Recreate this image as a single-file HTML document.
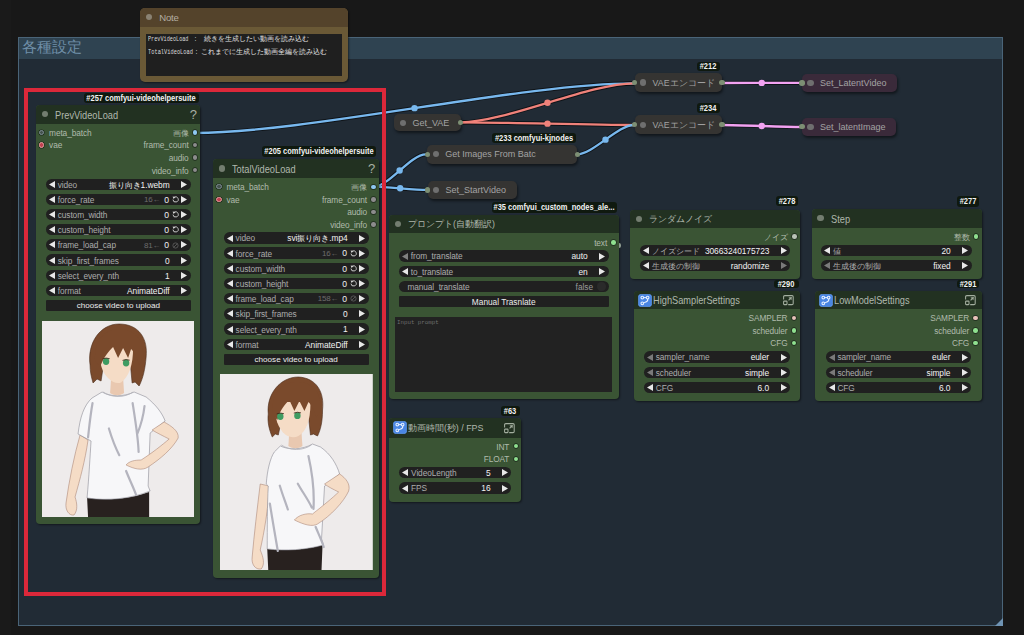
<!DOCTYPE html><html><head><meta charset="utf-8"><style>html,body{margin:0;padding:0;background:#181818;width:1024px;height:635px;overflow:hidden;position:relative;font-family:'Liberation Sans', sans-serif}</style></head><body>
<div style="position:absolute;left:0px;top:0px;width:11px;height:635px;background:#1a1a1a"></div>
<div style="position:absolute;left:18px;top:37px;width:985px;height:589px;background:#212b35;box-shadow:inset 0 0 0 1px #4a6478;"></div>
<div style="position:absolute;left:19px;top:38px;width:983px;height:21px;background:#2f4351;"></div>
<div style="position:absolute;left:21.50px;top:37.98px;height:18.44px;line-height:18.44px;font-size:14.75px;color:#6f8fa8;font-weight:400;font-family:'Liberation Sans', sans-serif;white-space:nowrap;">各種設定</div>
<svg style="position:absolute;left:995px;top:618px" width="8" height="8"><polygon points="8,0 8,8 0,8" fill="#6f93b3"/></svg>
<svg style="position:absolute;left:0;top:0" width="1024" height="635">
<path d="M195,133 C305.45108928842666,133 523.5489107115733,83.3 634,83.3" fill="none" stroke="rgba(0,0,0,0.55)" stroke-width="4.2"/>
<path d="M461,122.3 C505.3353696274205,122.3 589.6646303725795,83.3 634,83.3" fill="none" stroke="rgba(0,0,0,0.55)" stroke-width="4.2"/>
<path d="M461,122.3 C504.2552670203294,122.3 590.7447329796705,125 634,125" fill="none" stroke="rgba(0,0,0,0.55)" stroke-width="4.2"/>
<path d="M577,154.3 C593.022425690263,154.3 617.977574309737,125 634,125" fill="none" stroke="rgba(0,0,0,0.55)" stroke-width="4.2"/>
<path d="M373.5,186.7 C388.86753884003554,186.7 410.4324611599645,154.4 425.8,154.4" fill="none" stroke="rgba(0,0,0,0.55)" stroke-width="4.2"/>
<path d="M373.5,186.7 C386.8489934077443,186.7 413.45100659225574,189.9 426.8,189.9" fill="none" stroke="rgba(0,0,0,0.55)" stroke-width="4.2"/>
<path d="M722,83 C741.8750628929822,83 781.6249371070178,82.8 801.5,82.8" fill="none" stroke="rgba(0,0,0,0.55)" stroke-width="4.2"/>
<path d="M722,125 C741.8812883133866,125 781.6187116866134,127 801.5,127" fill="none" stroke="rgba(0,0,0,0.55)" stroke-width="4.2"/>
<path d="M195,133 C305.45108928842666,133 523.5489107115733,83.3 634,83.3" fill="none" stroke="#78b8ee" stroke-width="2.3"/>
<circle cx="414.5" cy="108.15" r="3.2" fill="#78b8ee"/>
<path d="M461,122.3 C505.3353696274205,122.3 589.6646303725795,83.3 634,83.3" fill="none" stroke="#f0827a" stroke-width="2.3"/>
<circle cx="547.5" cy="102.8" r="3.2" fill="#f0827a"/>
<path d="M461,122.3 C504.2552670203294,122.3 590.7447329796705,125 634,125" fill="none" stroke="#f0827a" stroke-width="2.3"/>
<circle cx="547.5" cy="123.65" r="3.2" fill="#f0827a"/>
<path d="M577,154.3 C593.022425690263,154.3 617.977574309737,125 634,125" fill="none" stroke="#78b8ee" stroke-width="2.3"/>
<circle cx="605.5" cy="139.65" r="3.2" fill="#78b8ee"/>
<path d="M373.5,186.7 C388.86753884003554,186.7 410.4324611599645,154.4 425.8,154.4" fill="none" stroke="#78b8ee" stroke-width="2.3"/>
<circle cx="399.65" cy="170.55" r="3.2" fill="#78b8ee"/>
<path d="M373.5,186.7 C386.8489934077443,186.7 413.45100659225574,189.9 426.8,189.9" fill="none" stroke="#78b8ee" stroke-width="2.3"/>
<circle cx="400.15" cy="188.3" r="3.2" fill="#78b8ee"/>
<path d="M722,83 C741.8750628929822,83 781.6249371070178,82.8 801.5,82.8" fill="none" stroke="#f2a2f2" stroke-width="2.3"/>
<circle cx="761.75" cy="82.9" r="3.2" fill="#f2a2f2"/>
<path d="M722,125 C741.8812883133866,125 781.6187116866134,127 801.5,127" fill="none" stroke="#f2a2f2" stroke-width="2.3"/>
<circle cx="761.75" cy="126.0" r="3.2" fill="#f2a2f2"/>
</svg>
<div style="position:absolute;left:140px;top:8px;width:207.5px;height:74px;background:#6a5936;border-radius:5px;box-shadow:1px 1px 2px rgba(0,0,0,0.45);overflow:hidden"><div style="position:absolute;left:0;top:0;right:0;height:18.5px;background:#54432b"></div></div>
<div style="position:absolute;left:146.2px;top:14.3px;width:6px;height:6px;background:#8a8273;border-radius:50%;"></div>
<div style="position:absolute;left:159.20px;top:11.90px;height:12.00px;line-height:12.00px;font-size:9.6px;color:#b3ada2;font-weight:400;font-family:'Liberation Sans', sans-serif;white-space:nowrap;letter-spacing:-0.2px">Note</div>
<div style="position:absolute;left:146.2px;top:34.2px;width:195.4px;height:41.6px;background:#1f1f1f;"></div>
<div style="position:absolute;left:147.5px;top:34.70px;height:9px;line-height:9px;font-size:7.4px;color:#dcdcdc;font-family:'Liberation Mono', monospace;white-space:nowrap;transform-origin:0 0;transform:scaleX(0.702)">PrevVideoLoad</div>
<div style="position:absolute;left:193.5px;top:34.70px;height:9px;line-height:9px;font-size:7.4px;color:#dcdcdc;font-family:'Liberation Mono', monospace;white-space:nowrap;transform-origin:0 0;transform:scaleX(0.676)">:</div>
<div style="position:absolute;left:203.50px;top:34.71px;height:8.38px;line-height:8.38px;font-size:6.7px;color:#e4e4e4;font-weight:400;font-family:'Liberation Sans', sans-serif;white-space:nowrap;">続きを生成したい動画を読み込む</div>
<div style="position:absolute;left:147.5px;top:47.90px;height:9px;line-height:9px;font-size:7.4px;color:#dcdcdc;font-family:'Liberation Mono', monospace;white-space:nowrap;transform-origin:0 0;transform:scaleX(0.724)">TotalVideoLoad</div>
<div style="position:absolute;left:195.2px;top:47.90px;height:9px;line-height:9px;font-size:7.4px;color:#dcdcdc;font-family:'Liberation Mono', monospace;white-space:nowrap;transform-origin:0 0;transform:scaleX(0.676)">:</div>
<div style="position:absolute;left:201.20px;top:47.93px;height:8.35px;line-height:8.35px;font-size:6.68px;color:#e4e4e4;font-weight:400;font-family:'Liberation Sans', sans-serif;white-space:nowrap;">これまでに生成した動画全編を読み込む</div>
<div style="position:absolute;left:36px;top:104.5px;width:164.3px;height:419.0px;background:#3a5434;border-radius:4px;box-shadow:1px 1px 2px rgba(0,0,0,0.45);overflow:hidden"><div style="position:absolute;left:0;top:0;right:0;height:19.0px;background:#223121"></div></div>
<div style="position:absolute;left:41.9px;top:110.9px;width:6.2px;height:6.2px;background:#737d70;border-radius:50%;"></div>
<div style="position:absolute;left:55.00px;top:108.50px;height:13.00px;line-height:13.00px;font-size:10.4px;color:#b0b8ad;font-weight:400;font-family:'Liberation Sans', sans-serif;white-space:nowrap;transform:scaleX(0.89);transform-origin:0 50%;">PrevVideoLoad</div>
<div style="position:absolute;left:-6.70px;width:400px;text-align:center;top:106.77px;height:16.25px;line-height:16.25px;font-size:13px;color:#a8b0a4;font-weight:400;font-family:'Liberation Sans', sans-serif;white-space:nowrap;">?</div>
<div style="position:absolute;left:39.099999999999994px;top:129.60000000000002px;width:5.4px;height:5.4px;border-radius:50%;box-sizing:border-box;border:1.4px solid #7f8f96;background:#44524c;box-shadow:0 0 0 0.6px rgba(0,0,0,0.5)"></div>
<div style="position:absolute;left:49.10px;top:127.71px;height:10.38px;line-height:10.38px;font-size:8.3px;color:#b0bbac;font-weight:400;font-family:'Liberation Sans', sans-serif;white-space:nowrap;letter-spacing:-0.1px">meta_batch</div>
<div style="position:absolute;left:39.099999999999994px;top:142.20000000000002px;width:5.4px;height:5.4px;border-radius:50%;box-sizing:border-box;border:1.4px solid #e9a0a0;background:#c04050;box-shadow:0 0 0 0.6px rgba(0,0,0,0.5)"></div>
<div style="position:absolute;left:49.10px;top:140.31px;height:10.38px;line-height:10.38px;font-size:8.3px;color:#b0bbac;font-weight:400;font-family:'Liberation Sans', sans-serif;white-space:nowrap;letter-spacing:-0.1px">vae</div>
<div style="position:absolute;left:192.8px;top:130.0px;width:4.6px;height:4.6px;background:#8ec8f2;border-radius:50%;box-shadow:0 0 0 0.7px #1d2a1c;"></div>
<div style="position:absolute;right:835.40px;text-align:right;top:127.71px;height:10.38px;line-height:10.38px;font-size:8.3px;color:#b0bbac;font-weight:400;font-family:'Liberation Sans', sans-serif;white-space:nowrap;letter-spacing:-0.1px">画像</div>
<div style="position:absolute;left:192.8px;top:142.6px;width:4.6px;height:4.6px;background:#8c8c8c;border-radius:50%;box-shadow:0 0 0 0.7px #1d2a1c;"></div>
<div style="position:absolute;right:835.40px;text-align:right;top:140.31px;height:10.38px;line-height:10.38px;font-size:8.3px;color:#b0bbac;font-weight:400;font-family:'Liberation Sans', sans-serif;white-space:nowrap;letter-spacing:-0.1px">frame_count</div>
<div style="position:absolute;left:192.8px;top:155.2px;width:4.6px;height:4.6px;background:#8c8c8c;border-radius:50%;box-shadow:0 0 0 0.7px #1d2a1c;"></div>
<div style="position:absolute;right:835.40px;text-align:right;top:152.91px;height:10.38px;line-height:10.38px;font-size:8.3px;color:#b0bbac;font-weight:400;font-family:'Liberation Sans', sans-serif;white-space:nowrap;letter-spacing:-0.1px">audio</div>
<div style="position:absolute;left:192.8px;top:167.8px;width:4.6px;height:4.6px;background:#8c8c8c;border-radius:50%;box-shadow:0 0 0 0.7px #1d2a1c;"></div>
<div style="position:absolute;right:835.40px;text-align:right;top:165.51px;height:10.38px;line-height:10.38px;font-size:8.3px;color:#b0bbac;font-weight:400;font-family:'Liberation Sans', sans-serif;white-space:nowrap;letter-spacing:-0.1px">video_info</div>
<div style="position:absolute;left:46px;top:178.5px;width:144.6px;height:11.400000000000006px;background:#202020;border-radius:5.700000000000003px;"></div>
<svg style="position:absolute;left:49px;top:180.70px" width="6" height="7"><polygon points="6,0 6,7 0,3.5" fill="#e8e8e8"/></svg>
<svg style="position:absolute;left:181.1px;top:180.70px" width="6" height="7"><polygon points="0,0 0,7 6,3.5" fill="#e8e8e8"/></svg>
<div style="position:absolute;left:57.80px;top:179.61px;height:10.38px;line-height:10.38px;font-size:8.3px;color:#acacac;font-weight:400;font-family:'Liberation Sans', sans-serif;white-space:nowrap;letter-spacing:-0.1px">video</div>
<div style="position:absolute;right:854.40px;text-align:right;top:179.55px;height:10.50px;line-height:10.50px;font-size:8.4px;color:#f2f2f2;font-weight:400;font-family:'Liberation Sans', sans-serif;white-space:nowrap;letter-spacing:-0.05px">振り向き1.webm</div>
<div style="position:absolute;left:46px;top:193.69px;width:144.6px;height:11.400000000000006px;background:#202020;border-radius:5.700000000000003px;"></div>
<svg style="position:absolute;left:49px;top:195.89px" width="6" height="7"><polygon points="6,0 6,7 0,3.5" fill="#e8e8e8"/></svg>
<svg style="position:absolute;left:181.1px;top:195.89px" width="6" height="7"><polygon points="0,0 0,7 6,3.5" fill="#e8e8e8"/></svg>
<div style="position:absolute;left:57.80px;top:194.80px;height:10.38px;line-height:10.38px;font-size:8.3px;color:#acacac;font-weight:400;font-family:'Liberation Sans', sans-serif;white-space:nowrap;letter-spacing:-0.1px">force_rate</div>
<div style="position:absolute;right:855.00px;text-align:right;top:194.61px;height:10.75px;line-height:10.75px;font-size:8.6px;color:#f2f2f2;font-weight:400;font-family:'Liberation Sans', sans-serif;white-space:nowrap;">0</div>
<svg style="position:absolute;left:172.00px;top:196.09px" width="7" height="7" viewBox="0 0 7 7"><path d="M2.2 1.2 A2.6 2.6 0 1 1 1.0 3.6" fill="none" stroke="#d8d8d8" stroke-width="0.9"/><polygon points="0.6,0.4 3.4,0.9 1.6,2.9" fill="#d8d8d8"/></svg>
<div style="position:absolute;right:863.70px;text-align:right;top:194.99px;height:10.00px;line-height:10.00px;font-size:8px;color:#6c6c6c;font-weight:400;font-family:'Liberation Sans', sans-serif;white-space:nowrap;letter-spacing:-0.2px">16←</div>
<div style="position:absolute;left:46px;top:208.88px;width:144.6px;height:11.400000000000006px;background:#202020;border-radius:5.700000000000003px;"></div>
<svg style="position:absolute;left:49px;top:211.08px" width="6" height="7"><polygon points="6,0 6,7 0,3.5" fill="#e8e8e8"/></svg>
<svg style="position:absolute;left:181.1px;top:211.08px" width="6" height="7"><polygon points="0,0 0,7 6,3.5" fill="#e8e8e8"/></svg>
<div style="position:absolute;left:57.80px;top:209.99px;height:10.38px;line-height:10.38px;font-size:8.3px;color:#acacac;font-weight:400;font-family:'Liberation Sans', sans-serif;white-space:nowrap;letter-spacing:-0.1px">custom_width</div>
<div style="position:absolute;right:855.00px;text-align:right;top:209.80px;height:10.75px;line-height:10.75px;font-size:8.6px;color:#f2f2f2;font-weight:400;font-family:'Liberation Sans', sans-serif;white-space:nowrap;">0</div>
<svg style="position:absolute;left:172.00px;top:211.28px" width="7" height="7" viewBox="0 0 7 7"><path d="M2.2 1.2 A2.6 2.6 0 1 1 1.0 3.6" fill="none" stroke="#d8d8d8" stroke-width="0.9"/><polygon points="0.6,0.4 3.4,0.9 1.6,2.9" fill="#d8d8d8"/></svg>
<div style="position:absolute;left:46px;top:224.07px;width:144.6px;height:11.400000000000006px;background:#202020;border-radius:5.700000000000003px;"></div>
<svg style="position:absolute;left:49px;top:226.27px" width="6" height="7"><polygon points="6,0 6,7 0,3.5" fill="#e8e8e8"/></svg>
<svg style="position:absolute;left:181.1px;top:226.27px" width="6" height="7"><polygon points="0,0 0,7 6,3.5" fill="#e8e8e8"/></svg>
<div style="position:absolute;left:57.80px;top:225.18px;height:10.38px;line-height:10.38px;font-size:8.3px;color:#acacac;font-weight:400;font-family:'Liberation Sans', sans-serif;white-space:nowrap;letter-spacing:-0.1px">custom_height</div>
<div style="position:absolute;right:855.00px;text-align:right;top:224.99px;height:10.75px;line-height:10.75px;font-size:8.6px;color:#f2f2f2;font-weight:400;font-family:'Liberation Sans', sans-serif;white-space:nowrap;">0</div>
<svg style="position:absolute;left:172.00px;top:226.47px" width="7" height="7" viewBox="0 0 7 7"><path d="M2.2 1.2 A2.6 2.6 0 1 1 1.0 3.6" fill="none" stroke="#d8d8d8" stroke-width="0.9"/><polygon points="0.6,0.4 3.4,0.9 1.6,2.9" fill="#d8d8d8"/></svg>
<div style="position:absolute;left:46px;top:239.26px;width:144.6px;height:11.400000000000006px;background:#202020;border-radius:5.700000000000003px;"></div>
<svg style="position:absolute;left:49px;top:241.46px" width="6" height="7"><polygon points="6,0 6,7 0,3.5" fill="#e8e8e8"/></svg>
<svg style="position:absolute;left:181.1px;top:241.46px" width="6" height="7"><polygon points="0,0 0,7 6,3.5" fill="#e8e8e8"/></svg>
<div style="position:absolute;left:57.80px;top:240.37px;height:10.38px;line-height:10.38px;font-size:8.3px;color:#acacac;font-weight:400;font-family:'Liberation Sans', sans-serif;white-space:nowrap;letter-spacing:-0.1px">frame_load_cap</div>
<div style="position:absolute;right:855.00px;text-align:right;top:240.18px;height:10.75px;line-height:10.75px;font-size:8.6px;color:#f2f2f2;font-weight:400;font-family:'Liberation Sans', sans-serif;white-space:nowrap;">0</div>
<svg style="position:absolute;left:172.00px;top:241.66px" width="7" height="7" viewBox="0 0 7 7"><circle cx="3.5" cy="3.5" r="2.6" fill="none" stroke="#6a6a6a" stroke-width="0.7"/><path d="M1.7 5.3 L5.3 1.7" stroke="#6a6a6a" stroke-width="0.7"/></svg>
<div style="position:absolute;right:863.70px;text-align:right;top:240.56px;height:10.00px;line-height:10.00px;font-size:8px;color:#6c6c6c;font-weight:400;font-family:'Liberation Sans', sans-serif;white-space:nowrap;letter-spacing:-0.2px">81←</div>
<div style="position:absolute;left:46px;top:254.45px;width:144.6px;height:11.399999999999977px;background:#202020;border-radius:5.699999999999989px;"></div>
<svg style="position:absolute;left:49px;top:256.65px" width="6" height="7"><polygon points="6,0 6,7 0,3.5" fill="#e8e8e8"/></svg>
<svg style="position:absolute;left:181.1px;top:256.65px" width="6" height="7"><polygon points="0,0 0,7 6,3.5" fill="#e8e8e8"/></svg>
<div style="position:absolute;left:57.80px;top:255.56px;height:10.38px;line-height:10.38px;font-size:8.3px;color:#acacac;font-weight:400;font-family:'Liberation Sans', sans-serif;white-space:nowrap;letter-spacing:-0.1px">skip_first_frames</div>
<div style="position:absolute;right:854.40px;text-align:right;top:255.50px;height:10.50px;line-height:10.50px;font-size:8.4px;color:#f2f2f2;font-weight:400;font-family:'Liberation Sans', sans-serif;white-space:nowrap;letter-spacing:-0.05px">0</div>
<div style="position:absolute;left:46px;top:269.64px;width:144.6px;height:11.399999999999977px;background:#202020;border-radius:5.699999999999989px;"></div>
<svg style="position:absolute;left:49px;top:271.84px" width="6" height="7"><polygon points="6,0 6,7 0,3.5" fill="#e8e8e8"/></svg>
<svg style="position:absolute;left:181.1px;top:271.84px" width="6" height="7"><polygon points="0,0 0,7 6,3.5" fill="#e8e8e8"/></svg>
<div style="position:absolute;left:57.80px;top:270.75px;height:10.38px;line-height:10.38px;font-size:8.3px;color:#acacac;font-weight:400;font-family:'Liberation Sans', sans-serif;white-space:nowrap;letter-spacing:-0.1px">select_every_nth</div>
<div style="position:absolute;right:854.40px;text-align:right;top:270.69px;height:10.50px;line-height:10.50px;font-size:8.4px;color:#f2f2f2;font-weight:400;font-family:'Liberation Sans', sans-serif;white-space:nowrap;letter-spacing:-0.05px">1</div>
<div style="position:absolute;left:46px;top:284.83px;width:144.6px;height:11.399999999999977px;background:#202020;border-radius:5.699999999999989px;"></div>
<svg style="position:absolute;left:49px;top:287.03px" width="6" height="7"><polygon points="6,0 6,7 0,3.5" fill="#e8e8e8"/></svg>
<svg style="position:absolute;left:181.1px;top:287.03px" width="6" height="7"><polygon points="0,0 0,7 6,3.5" fill="#e8e8e8"/></svg>
<div style="position:absolute;left:57.80px;top:285.94px;height:10.38px;line-height:10.38px;font-size:8.3px;color:#acacac;font-weight:400;font-family:'Liberation Sans', sans-serif;white-space:nowrap;letter-spacing:-0.1px">format</div>
<div style="position:absolute;right:854.40px;text-align:right;top:285.88px;height:10.50px;line-height:10.50px;font-size:8.4px;color:#f2f2f2;font-weight:400;font-family:'Liberation Sans', sans-serif;white-space:nowrap;letter-spacing:-0.05px">AnimateDiff</div>
<div style="position:absolute;left:46px;top:300.02px;width:144.6px;height:11.3px;background:#202020;border-radius:1px;"></div>
<div style="position:absolute;left:-81.70px;width:400px;text-align:center;top:301.26px;height:10.12px;line-height:10.12px;font-size:8.1px;color:#ececec;font-weight:400;font-family:'Liberation Sans', sans-serif;white-space:nowrap;">choose video to upload</div>
<svg style="position:absolute;left:42px;top:321px" width="152.2" height="196" viewBox="0 0 152 196" preserveAspectRatio="none"><rect width="152" height="196" fill="#eeebeb"/><path d="M45,176 C66,180 88,178 107,171 L107,196 L46,196 Z" fill="#28211f"/><path d="M38,114 L46,119 C43,140 38,158 33,176 C35,182 36,189 32,194 C27,195 23,189 24,182 C27,160 32,135 38,114 Z" fill="#f5dcc6" stroke="#a07868" stroke-width="0.5"/><path d="M60,71 C68,76 82,76 92,71 L104,76 C114,84 120,92 123,100 L108,112 L106,165 L108,170 C88,178 66,180 45,177 C47,155 48,135 49,120 L36,113 C38,96 42,84 50,77 Z" fill="#f7f7f9" stroke="#8c8c96" stroke-width="0.6"/><path d="M90.5,82 C93,98 96,116 96.5,131 M102.4,85 C101,98 98,106 95,113.4 M66.8,107.5 C70,118 74,128 77.2,134.2 M50.5,82 C48,96 47,108 46,116.4 M84,150 C88,160 92,168 94,174" stroke="#b4b4be" stroke-width="2.2" fill="none" stroke-linecap="round"/><path d="M110,109 L122,101 C129,105 137,110 136,117 C130,128 118,138 106,146 C100,150 92,148 84,144 C87,140 93,139 99,139 C110,132 120,124 127,118 C121,115 115,112 110,109 Z" fill="#f5dcc6" stroke="#a07868" stroke-width="0.5"/><path d="M69,57 L81,57 L82,72 C78,75 72,75 68,72 Z" fill="#e9c8b0"/><path d="M61,71 C70,77 82,77 91,71" stroke="#b0b0b8" stroke-width="0.8" fill="none"/><path d="M48,44 C45,22 58,3 77,3 C97,3 106,18 104,36 C103,48 101,57 97,65 L93,61 L90,62 L88,40 L62,40 L59,60 L55,58 L51,62 C49,55 48,50 48,44 Z" fill="#7a4a2c" stroke="#4a2c1a" stroke-width="0.6"/><path d="M57,26 C57,42 60,52 67,58 C71,61.5 75,63 79,61.5 C87,55 91,45 91,26 Z" fill="#f5dcc6"/><path d="M53,40 C52,18 63,8 78,8 C94,9 102,20 101,36 L97,44 C95,36 92,31 89,28 L86,37 L81,27 L76,37 L71,26 C67,30 62,35 58,46 Z" fill="#7a4a2c"/><ellipse cx="64" cy="40.5" rx="3.2" ry="3.4" fill="#3f9c62"/><path d="M60.4,37.9 Q64,36.3 67.6,37.7" stroke="#3a2418" stroke-width="0.8" fill="none"/><ellipse cx="84" cy="42" rx="3.2" ry="3.4" fill="#3f9c62"/><path d="M80.4,39.4 Q84,37.8 87.6,39.2" stroke="#3a2418" stroke-width="0.8" fill="none"/></svg>
<div style="position:absolute;left:83.5px;top:93px;width:115.5px;height:10.200000000000003px;background:#0f190f;border-radius:3px;"></div>
<div style="position:absolute;left:-58.75px;width:400px;text-align:center;top:92.92px;height:10.75px;line-height:10.75px;font-size:8.6px;color:#f2f2f2;font-weight:700;font-family:'Liberation Sans', sans-serif;white-space:nowrap;transform:scaleX(0.87);transform-origin:50% 50%;">#257 comfyui-videohelpersuite</div>
<div style="position:absolute;left:213.3px;top:159px;width:165.39999999999998px;height:419px;background:#3a5434;border-radius:4px;box-shadow:1px 1px 2px rgba(0,0,0,0.45);overflow:hidden"><div style="position:absolute;left:0;top:0;right:0;height:19px;background:#223121"></div></div>
<div style="position:absolute;left:219.20000000000002px;top:165.4px;width:6.2px;height:6.2px;background:#737d70;border-radius:50%;"></div>
<div style="position:absolute;left:232.30px;top:163.00px;height:13.00px;line-height:13.00px;font-size:10.4px;color:#b0b8ad;font-weight:400;font-family:'Liberation Sans', sans-serif;white-space:nowrap;transform:scaleX(0.89);transform-origin:0 50%;">TotalVideoLoad</div>
<div style="position:absolute;left:171.70px;width:400px;text-align:center;top:161.28px;height:16.25px;line-height:16.25px;font-size:13px;color:#a8b0a4;font-weight:400;font-family:'Liberation Sans', sans-serif;white-space:nowrap;">?</div>
<div style="position:absolute;left:216.40000000000003px;top:184.10000000000002px;width:5.4px;height:5.4px;border-radius:50%;box-sizing:border-box;border:1.4px solid #7f8f96;background:#44524c;box-shadow:0 0 0 0.6px rgba(0,0,0,0.5)"></div>
<div style="position:absolute;left:226.40px;top:182.21px;height:10.38px;line-height:10.38px;font-size:8.3px;color:#b0bbac;font-weight:400;font-family:'Liberation Sans', sans-serif;white-space:nowrap;letter-spacing:-0.1px">meta_batch</div>
<div style="position:absolute;left:216.40000000000003px;top:196.70000000000002px;width:5.4px;height:5.4px;border-radius:50%;box-sizing:border-box;border:1.4px solid #e9a0a0;background:#c04050;box-shadow:0 0 0 0.6px rgba(0,0,0,0.5)"></div>
<div style="position:absolute;left:226.40px;top:194.81px;height:10.38px;line-height:10.38px;font-size:8.3px;color:#b0bbac;font-weight:400;font-family:'Liberation Sans', sans-serif;white-space:nowrap;letter-spacing:-0.1px">vae</div>
<div style="position:absolute;left:371.2px;top:184.5px;width:4.6px;height:4.6px;background:#8ec8f2;border-radius:50%;box-shadow:0 0 0 0.7px #1d2a1c;"></div>
<div style="position:absolute;right:657.00px;text-align:right;top:182.21px;height:10.38px;line-height:10.38px;font-size:8.3px;color:#b0bbac;font-weight:400;font-family:'Liberation Sans', sans-serif;white-space:nowrap;letter-spacing:-0.1px">画像</div>
<div style="position:absolute;left:371.2px;top:197.1px;width:4.6px;height:4.6px;background:#8c8c8c;border-radius:50%;box-shadow:0 0 0 0.7px #1d2a1c;"></div>
<div style="position:absolute;right:657.00px;text-align:right;top:194.81px;height:10.38px;line-height:10.38px;font-size:8.3px;color:#b0bbac;font-weight:400;font-family:'Liberation Sans', sans-serif;white-space:nowrap;letter-spacing:-0.1px">frame_count</div>
<div style="position:absolute;left:371.2px;top:209.7px;width:4.6px;height:4.6px;background:#8c8c8c;border-radius:50%;box-shadow:0 0 0 0.7px #1d2a1c;"></div>
<div style="position:absolute;right:657.00px;text-align:right;top:207.41px;height:10.38px;line-height:10.38px;font-size:8.3px;color:#b0bbac;font-weight:400;font-family:'Liberation Sans', sans-serif;white-space:nowrap;letter-spacing:-0.1px">audio</div>
<div style="position:absolute;left:371.2px;top:222.3px;width:4.6px;height:4.6px;background:#8c8c8c;border-radius:50%;box-shadow:0 0 0 0.7px #1d2a1c;"></div>
<div style="position:absolute;right:657.00px;text-align:right;top:220.01px;height:10.38px;line-height:10.38px;font-size:8.3px;color:#b0bbac;font-weight:400;font-family:'Liberation Sans', sans-serif;white-space:nowrap;letter-spacing:-0.1px">video_info</div>
<div style="position:absolute;left:223.8px;top:232.3px;width:144.8px;height:11.400000000000006px;background:#202020;border-radius:5.700000000000003px;"></div>
<svg style="position:absolute;left:226.8px;top:234.50px" width="6" height="7"><polygon points="6,0 6,7 0,3.5" fill="#e8e8e8"/></svg>
<svg style="position:absolute;left:359.1px;top:234.50px" width="6" height="7"><polygon points="0,0 0,7 6,3.5" fill="#e8e8e8"/></svg>
<div style="position:absolute;left:235.60px;top:233.41px;height:10.38px;line-height:10.38px;font-size:8.3px;color:#acacac;font-weight:400;font-family:'Liberation Sans', sans-serif;white-space:nowrap;letter-spacing:-0.1px">video</div>
<div style="position:absolute;right:676.40px;text-align:right;top:233.35px;height:10.50px;line-height:10.50px;font-size:8.4px;color:#f2f2f2;font-weight:400;font-family:'Liberation Sans', sans-serif;white-space:nowrap;letter-spacing:-0.05px">svi振り向き.mp4</div>
<div style="position:absolute;left:223.8px;top:247.49px;width:144.8px;height:11.399999999999977px;background:#202020;border-radius:5.699999999999989px;"></div>
<svg style="position:absolute;left:226.8px;top:249.69px" width="6" height="7"><polygon points="6,0 6,7 0,3.5" fill="#e8e8e8"/></svg>
<svg style="position:absolute;left:359.1px;top:249.69px" width="6" height="7"><polygon points="0,0 0,7 6,3.5" fill="#e8e8e8"/></svg>
<div style="position:absolute;left:235.60px;top:248.60px;height:10.38px;line-height:10.38px;font-size:8.3px;color:#acacac;font-weight:400;font-family:'Liberation Sans', sans-serif;white-space:nowrap;letter-spacing:-0.1px">force_rate</div>
<div style="position:absolute;right:677.00px;text-align:right;top:248.41px;height:10.75px;line-height:10.75px;font-size:8.6px;color:#f2f2f2;font-weight:400;font-family:'Liberation Sans', sans-serif;white-space:nowrap;">0</div>
<svg style="position:absolute;left:350.00px;top:249.89px" width="7" height="7" viewBox="0 0 7 7"><path d="M2.2 1.2 A2.6 2.6 0 1 1 1.0 3.6" fill="none" stroke="#d8d8d8" stroke-width="0.9"/><polygon points="0.6,0.4 3.4,0.9 1.6,2.9" fill="#d8d8d8"/></svg>
<div style="position:absolute;right:685.70px;text-align:right;top:248.79px;height:10.00px;line-height:10.00px;font-size:8px;color:#6c6c6c;font-weight:400;font-family:'Liberation Sans', sans-serif;white-space:nowrap;letter-spacing:-0.2px">16←</div>
<div style="position:absolute;left:223.8px;top:262.68px;width:144.8px;height:11.399999999999977px;background:#202020;border-radius:5.699999999999989px;"></div>
<svg style="position:absolute;left:226.8px;top:264.88px" width="6" height="7"><polygon points="6,0 6,7 0,3.5" fill="#e8e8e8"/></svg>
<svg style="position:absolute;left:359.1px;top:264.88px" width="6" height="7"><polygon points="0,0 0,7 6,3.5" fill="#e8e8e8"/></svg>
<div style="position:absolute;left:235.60px;top:263.79px;height:10.38px;line-height:10.38px;font-size:8.3px;color:#acacac;font-weight:400;font-family:'Liberation Sans', sans-serif;white-space:nowrap;letter-spacing:-0.1px">custom_width</div>
<div style="position:absolute;right:677.00px;text-align:right;top:263.61px;height:10.75px;line-height:10.75px;font-size:8.6px;color:#f2f2f2;font-weight:400;font-family:'Liberation Sans', sans-serif;white-space:nowrap;">0</div>
<svg style="position:absolute;left:350.00px;top:265.08px" width="7" height="7" viewBox="0 0 7 7"><path d="M2.2 1.2 A2.6 2.6 0 1 1 1.0 3.6" fill="none" stroke="#d8d8d8" stroke-width="0.9"/><polygon points="0.6,0.4 3.4,0.9 1.6,2.9" fill="#d8d8d8"/></svg>
<div style="position:absolute;left:223.8px;top:277.87px;width:144.8px;height:11.399999999999977px;background:#202020;border-radius:5.699999999999989px;"></div>
<svg style="position:absolute;left:226.8px;top:280.07px" width="6" height="7"><polygon points="6,0 6,7 0,3.5" fill="#e8e8e8"/></svg>
<svg style="position:absolute;left:359.1px;top:280.07px" width="6" height="7"><polygon points="0,0 0,7 6,3.5" fill="#e8e8e8"/></svg>
<div style="position:absolute;left:235.60px;top:278.98px;height:10.38px;line-height:10.38px;font-size:8.3px;color:#acacac;font-weight:400;font-family:'Liberation Sans', sans-serif;white-space:nowrap;letter-spacing:-0.1px">custom_height</div>
<div style="position:absolute;right:677.00px;text-align:right;top:278.80px;height:10.75px;line-height:10.75px;font-size:8.6px;color:#f2f2f2;font-weight:400;font-family:'Liberation Sans', sans-serif;white-space:nowrap;">0</div>
<svg style="position:absolute;left:350.00px;top:280.27px" width="7" height="7" viewBox="0 0 7 7"><path d="M2.2 1.2 A2.6 2.6 0 1 1 1.0 3.6" fill="none" stroke="#d8d8d8" stroke-width="0.9"/><polygon points="0.6,0.4 3.4,0.9 1.6,2.9" fill="#d8d8d8"/></svg>
<div style="position:absolute;left:223.8px;top:293.06px;width:144.8px;height:11.399999999999977px;background:#202020;border-radius:5.699999999999989px;"></div>
<svg style="position:absolute;left:226.8px;top:295.26px" width="6" height="7"><polygon points="6,0 6,7 0,3.5" fill="#e8e8e8"/></svg>
<svg style="position:absolute;left:359.1px;top:295.26px" width="6" height="7"><polygon points="0,0 0,7 6,3.5" fill="#e8e8e8"/></svg>
<div style="position:absolute;left:235.60px;top:294.17px;height:10.38px;line-height:10.38px;font-size:8.3px;color:#acacac;font-weight:400;font-family:'Liberation Sans', sans-serif;white-space:nowrap;letter-spacing:-0.1px">frame_load_cap</div>
<div style="position:absolute;right:677.00px;text-align:right;top:293.99px;height:10.75px;line-height:10.75px;font-size:8.6px;color:#f2f2f2;font-weight:400;font-family:'Liberation Sans', sans-serif;white-space:nowrap;">0</div>
<svg style="position:absolute;left:350.00px;top:295.46px" width="7" height="7" viewBox="0 0 7 7"><circle cx="3.5" cy="3.5" r="2.6" fill="none" stroke="#6a6a6a" stroke-width="0.7"/><path d="M1.7 5.3 L5.3 1.7" stroke="#6a6a6a" stroke-width="0.7"/></svg>
<div style="position:absolute;right:685.70px;text-align:right;top:294.36px;height:10.00px;line-height:10.00px;font-size:8px;color:#6c6c6c;font-weight:400;font-family:'Liberation Sans', sans-serif;white-space:nowrap;letter-spacing:-0.2px">158←</div>
<div style="position:absolute;left:223.8px;top:308.25px;width:144.8px;height:11.399999999999977px;background:#202020;border-radius:5.699999999999989px;"></div>
<svg style="position:absolute;left:226.8px;top:310.45px" width="6" height="7"><polygon points="6,0 6,7 0,3.5" fill="#e8e8e8"/></svg>
<svg style="position:absolute;left:359.1px;top:310.45px" width="6" height="7"><polygon points="0,0 0,7 6,3.5" fill="#e8e8e8"/></svg>
<div style="position:absolute;left:235.60px;top:309.36px;height:10.38px;line-height:10.38px;font-size:8.3px;color:#acacac;font-weight:400;font-family:'Liberation Sans', sans-serif;white-space:nowrap;letter-spacing:-0.1px">skip_first_frames</div>
<div style="position:absolute;right:676.40px;text-align:right;top:309.30px;height:10.50px;line-height:10.50px;font-size:8.4px;color:#f2f2f2;font-weight:400;font-family:'Liberation Sans', sans-serif;white-space:nowrap;letter-spacing:-0.05px">0</div>
<div style="position:absolute;left:223.8px;top:323.44px;width:144.8px;height:11.399999999999977px;background:#202020;border-radius:5.699999999999989px;"></div>
<svg style="position:absolute;left:226.8px;top:325.64px" width="6" height="7"><polygon points="6,0 6,7 0,3.5" fill="#e8e8e8"/></svg>
<svg style="position:absolute;left:359.1px;top:325.64px" width="6" height="7"><polygon points="0,0 0,7 6,3.5" fill="#e8e8e8"/></svg>
<div style="position:absolute;left:235.60px;top:324.55px;height:10.38px;line-height:10.38px;font-size:8.3px;color:#acacac;font-weight:400;font-family:'Liberation Sans', sans-serif;white-space:nowrap;letter-spacing:-0.1px">select_every_nth</div>
<div style="position:absolute;right:676.40px;text-align:right;top:324.49px;height:10.50px;line-height:10.50px;font-size:8.4px;color:#f2f2f2;font-weight:400;font-family:'Liberation Sans', sans-serif;white-space:nowrap;letter-spacing:-0.05px">1</div>
<div style="position:absolute;left:223.8px;top:338.63px;width:144.8px;height:11.399999999999977px;background:#202020;border-radius:5.699999999999989px;"></div>
<svg style="position:absolute;left:226.8px;top:340.83px" width="6" height="7"><polygon points="6,0 6,7 0,3.5" fill="#e8e8e8"/></svg>
<svg style="position:absolute;left:359.1px;top:340.83px" width="6" height="7"><polygon points="0,0 0,7 6,3.5" fill="#e8e8e8"/></svg>
<div style="position:absolute;left:235.60px;top:339.74px;height:10.38px;line-height:10.38px;font-size:8.3px;color:#acacac;font-weight:400;font-family:'Liberation Sans', sans-serif;white-space:nowrap;letter-spacing:-0.1px">format</div>
<div style="position:absolute;right:676.40px;text-align:right;top:339.68px;height:10.50px;line-height:10.50px;font-size:8.4px;color:#f2f2f2;font-weight:400;font-family:'Liberation Sans', sans-serif;white-space:nowrap;letter-spacing:-0.05px">AnimateDiff</div>
<div style="position:absolute;left:223.8px;top:353.82px;width:144.8px;height:11.3px;background:#202020;border-radius:1px;"></div>
<div style="position:absolute;left:96.20px;width:400px;text-align:center;top:355.06px;height:10.12px;line-height:10.12px;font-size:8.1px;color:#ececec;font-weight:400;font-family:'Liberation Sans', sans-serif;white-space:nowrap;">choose video to upload</div>
<svg style="position:absolute;left:220.2px;top:374px" width="152.8" height="196" viewBox="0 0 152 196" preserveAspectRatio="none"><rect width="152" height="196" fill="#eeebeb"/><path d="M47,175 C66,177 84,176 102,171 L101,196 L48,196 Z" fill="#28211f"/><path d="M49,112 C48,135 44,158 40,176 C43,183 45,190 41,195 C35,196 31,190 32,183 C34,160 37,135 40,110 Z" fill="#f5dcc6" stroke="#a07868" stroke-width="0.5"/><path d="M60,72 C68,76 82,76 92,70 L100,73 C110,80 116,90 119,100 L104,112 L101,165 L103,171 C84,176 66,177 47,175 C47,152 47,132 48,112 L46,110 C47,96 50,84 54,78 Z" fill="#f7f7f9" stroke="#8c8c96" stroke-width="0.6"/><path d="M88,82 C92,100 94,118 93,135 M59.5,111.7 C62,120 65,128 67.5,135.5 M77.4,109.7 C82,118 88,126 91.3,133.5 M95.2,153 C98,160 101,166 103.2,173 M49.6,129.5 C52,145 55,162 57.5,177" stroke="#b4b4be" stroke-width="2.2" fill="none" stroke-linecap="round"/><path d="M104,110 L119,100 C125,104 130,110 128,117 C123,128 110,142 97,150 C92,153 84,151 74,146 C78,141 86,139 92,140 C102,132 112,124 118,118 C112,115 108,113 104,110 Z" fill="#f5dcc6" stroke="#a07868" stroke-width="0.5"/><path d="M69,57 L81,57 L82,72 C78,75 72,75 68,72 Z" fill="#e9c8b0"/><path d="M61,71 C70,77 82,77 91,71" stroke="#b0b0b8" stroke-width="0.8" fill="none"/><path d="M48,40 C46,20 60,3 78,3 C96,4 104,18 102,36 C102,48 100,56 97,62 L93,60 L90,61 L88,42 L62,42 L58,61 L55,60 L52,63 C49,56 47,48 48,40 Z" fill="#7a4a2c" stroke="#4a2c1a" stroke-width="0.6"/><path d="M54,28 C54,44 58,55 65,60.5 C69,63.5 74,64 78,62 C86,57 90,47 90,28 Z" fill="#f5dcc6"/><path d="M52,40 C51,18 62,8 78,8 C94,9 101,20 100,36 L96,44 C94,36 91,31 88,28 L84,37 L79,27 L74,37 L69,26 C65,30 60,35 57,46 Z" fill="#7a4a2c"/><ellipse cx="60" cy="42.5" rx="3.2" ry="3.4" fill="#3f9c62"/><path d="M56.4,39.9 Q60,38.3 63.6,39.7" stroke="#3a2418" stroke-width="0.8" fill="none"/><ellipse cx="77" cy="41.7" rx="3.2" ry="3.4" fill="#3f9c62"/><path d="M73.4,39.1 Q77,37.5 80.6,38.900000000000006" stroke="#3a2418" stroke-width="0.8" fill="none"/></svg>
<div style="position:absolute;left:262.3px;top:145.8px;width:113.69999999999999px;height:11.199999999999989px;background:#0f190f;border-radius:3px;"></div>
<div style="position:absolute;left:119.15px;width:400px;text-align:center;top:146.22px;height:10.75px;line-height:10.75px;font-size:8.6px;color:#f2f2f2;font-weight:700;font-family:'Liberation Sans', sans-serif;white-space:nowrap;transform:scaleX(0.87);transform-origin:50% 50%;">#205 comfyui-videohelpersuite</div>
<div style="position:absolute;left:394.4px;top:114px;width:66.20000000000005px;height:17.19999999999999px;background:#353432;border-radius:5px;box-shadow:1px 2px 3px rgba(0,0,0,0.5);"></div>
<div style="position:absolute;left:399.79999999999995px;top:119.5px;width:6.2px;height:6.2px;background:#6f6f6f;border-radius:50%;"></div>
<div style="position:absolute;left:412.40px;top:117.57px;height:11.25px;line-height:11.25px;font-size:9px;color:#a3a3a3;font-weight:400;font-family:'Liberation Sans', sans-serif;white-space:nowrap;">Get_VAE</div>
<div style="position:absolute;left:457.90000000000003px;top:119.89999999999999px;width:5.4px;height:5.4px;background:#7d8f74;border-radius:50%;"></div>
<div style="position:absolute;left:427.2px;top:145px;width:150.00000000000006px;height:18.80000000000001px;background:#353432;border-radius:5px;box-shadow:1px 2px 3px rgba(0,0,0,0.5);"></div>
<div style="position:absolute;left:424.5px;top:151.70000000000002px;width:5.4px;height:5.4px;background:#7d8f74;border-radius:50%;"></div>
<div style="position:absolute;left:432.59999999999997px;top:151.3px;width:6.2px;height:6.2px;background:#6f6f6f;border-radius:50%;"></div>
<div style="position:absolute;left:445.20px;top:149.38px;height:11.25px;line-height:11.25px;font-size:9px;color:#a3a3a3;font-weight:400;font-family:'Liberation Sans', sans-serif;white-space:nowrap;">Get Images From Batc</div>
<div style="position:absolute;left:574.5px;top:151.70000000000002px;width:5.4px;height:5.4px;background:#7d8f74;border-radius:50%;"></div>
<div style="position:absolute;left:492px;top:132.5px;width:83.60000000000002px;height:10.900000000000006px;background:#0f190f;border-radius:3px;"></div>
<div style="position:absolute;left:333.80px;width:400px;text-align:center;top:132.77px;height:10.75px;line-height:10.75px;font-size:8.6px;color:#f2f2f2;font-weight:700;font-family:'Liberation Sans', sans-serif;white-space:nowrap;transform:scaleX(0.87);transform-origin:50% 50%;">#233 comfyui-kjnodes</div>
<div style="position:absolute;left:427.6px;top:180.6px;width:89.39999999999998px;height:18.599999999999994px;background:#353432;border-radius:5px;box-shadow:1px 2px 3px rgba(0,0,0,0.5);"></div>
<div style="position:absolute;left:424.90000000000003px;top:187.2px;width:5.4px;height:5.4px;background:#7d8f74;border-radius:50%;"></div>
<div style="position:absolute;left:433.0px;top:186.79999999999998px;width:6.2px;height:6.2px;background:#6f6f6f;border-radius:50%;"></div>
<div style="position:absolute;left:445.60px;top:184.87px;height:11.25px;line-height:11.25px;font-size:9px;color:#a3a3a3;font-weight:400;font-family:'Liberation Sans', sans-serif;white-space:nowrap;">Set_StartVideo</div>
<div style="position:absolute;left:634.6px;top:72.8px;width:87.39999999999998px;height:19.400000000000006px;background:#353432;border-radius:5px;box-shadow:1px 2px 3px rgba(0,0,0,0.5);"></div>
<div style="position:absolute;left:631.9px;top:79.8px;width:5.4px;height:5.4px;background:#7d8f74;border-radius:50%;"></div>
<div style="position:absolute;left:640.0px;top:79.4px;width:6.2px;height:6.2px;background:#6f6f6f;border-radius:50%;"></div>
<div style="position:absolute;left:652.60px;top:77.60px;height:11.00px;line-height:11.00px;font-size:8.8px;color:#a3a3a3;font-weight:400;font-family:'Liberation Sans', sans-serif;white-space:nowrap;">VAEエンコード</div>
<div style="position:absolute;left:719.3px;top:79.8px;width:5.4px;height:5.4px;background:#7d8f74;border-radius:50%;"></div>
<div style="position:absolute;left:696.7px;top:62px;width:23.299999999999955px;height:9.200000000000003px;background:#0f190f;border-radius:3px;"></div>
<div style="position:absolute;left:508.35px;width:400px;text-align:center;top:61.42px;height:10.75px;line-height:10.75px;font-size:8.6px;color:#f2f2f2;font-weight:700;font-family:'Liberation Sans', sans-serif;white-space:nowrap;transform:scaleX(0.87);transform-origin:50% 50%;">#212</div>
<div style="position:absolute;left:634.6px;top:115.4px;width:87.39999999999998px;height:18.599999999999994px;background:#353432;border-radius:5px;box-shadow:1px 2px 3px rgba(0,0,0,0.5);"></div>
<div style="position:absolute;left:631.9px;top:122.0px;width:5.4px;height:5.4px;background:#7d8f74;border-radius:50%;"></div>
<div style="position:absolute;left:640.0px;top:121.60000000000001px;width:6.2px;height:6.2px;background:#6f6f6f;border-radius:50%;"></div>
<div style="position:absolute;left:652.60px;top:119.80px;height:11.00px;line-height:11.00px;font-size:8.8px;color:#a3a3a3;font-weight:400;font-family:'Liberation Sans', sans-serif;white-space:nowrap;">VAEエンコード</div>
<div style="position:absolute;left:719.3px;top:122.0px;width:5.4px;height:5.4px;background:#7d8f74;border-radius:50%;"></div>
<div style="position:absolute;left:696.7px;top:102.8px;width:23.299999999999955px;height:10.200000000000003px;background:#0f190f;border-radius:3px;"></div>
<div style="position:absolute;left:508.35px;width:400px;text-align:center;top:102.72px;height:10.75px;line-height:10.75px;font-size:8.6px;color:#f2f2f2;font-weight:700;font-family:'Liberation Sans', sans-serif;white-space:nowrap;transform:scaleX(0.87);transform-origin:50% 50%;">#234</div>
<div style="position:absolute;left:802px;top:74px;width:95px;height:18.200000000000003px;background:#3a2a3a;border-radius:5px;box-shadow:1px 2px 3px rgba(0,0,0,0.5);"></div>
<div style="position:absolute;left:799.3px;top:80.39999999999999px;width:5.4px;height:5.4px;background:#7d8f74;border-radius:50%;"></div>
<div style="position:absolute;left:807.4px;top:80.0px;width:6.2px;height:6.2px;background:#6f6f6f;border-radius:50%;"></div>
<div style="position:absolute;left:820.00px;top:78.07px;height:11.25px;line-height:11.25px;font-size:9px;color:#a3a3a3;font-weight:400;font-family:'Liberation Sans', sans-serif;white-space:nowrap;">Set_LatentVideo</div>
<div style="position:absolute;left:802px;top:117.8px;width:94.39999999999998px;height:18.000000000000014px;background:#3a2a3a;border-radius:5px;box-shadow:1px 2px 3px rgba(0,0,0,0.5);"></div>
<div style="position:absolute;left:799.3px;top:124.10000000000001px;width:5.4px;height:5.4px;background:#7d8f74;border-radius:50%;"></div>
<div style="position:absolute;left:807.4px;top:123.70000000000002px;width:6.2px;height:6.2px;background:#6f6f6f;border-radius:50%;"></div>
<div style="position:absolute;left:820.00px;top:121.78px;height:11.25px;line-height:11.25px;font-size:9px;color:#a3a3a3;font-weight:400;font-family:'Liberation Sans', sans-serif;white-space:nowrap;">Set_latentImage</div>
<div style="position:absolute;left:389px;top:214.5px;width:230px;height:184.3px;background:#3a5434;border-radius:4px;box-shadow:1px 1px 2px rgba(0,0,0,0.45);overflow:hidden"><div style="position:absolute;left:0;top:0;right:0;height:18.900000000000006px;background:#223121"></div></div>
<div style="position:absolute;left:394.9px;top:220.85px;width:6.2px;height:6.2px;background:#737d70;border-radius:50%;"></div>
<div style="position:absolute;left:408.00px;top:219.45px;height:11.00px;line-height:11.00px;font-size:8.8px;color:#b0b8ad;font-weight:400;font-family:'Liberation Sans', sans-serif;white-space:nowrap;">プロンプト(自動翻訳)</div>
<div style="position:absolute;left:491.5px;top:202px;width:125.89999999999998px;height:10.599999999999994px;background:#0f190f;border-radius:3px;"></div>
<div style="position:absolute;left:354.45px;width:400px;text-align:center;top:202.12px;height:10.75px;line-height:10.75px;font-size:8.6px;color:#f2f2f2;font-weight:700;font-family:'Liberation Sans', sans-serif;white-space:nowrap;transform:scaleX(0.87);transform-origin:50% 50%;">#35 comfyui_custom_nodes_ale...</div>
<div style="position:absolute;left:611.3000000000001px;top:240.2px;width:4.6px;height:4.6px;background:#8fe08f;border-radius:50%;box-shadow:0 0 0 0.7px #1d2a1c;"></div>
<div style="position:absolute;right:416.90px;text-align:right;top:237.91px;height:10.38px;line-height:10.38px;font-size:8.3px;color:#b0bbac;font-weight:400;font-family:'Liberation Sans', sans-serif;white-space:nowrap;letter-spacing:-0.1px">text</div>
<div style="position:absolute;left:619px;top:242.6px;width:2.4px;height:5px;background:#8d9a8f;border-radius:0 3px 3px 0;"></div>
<div style="position:absolute;left:399px;top:250.4px;width:209.60000000000002px;height:11.299999999999983px;background:#202020;border-radius:5.6499999999999915px;"></div>
<svg style="position:absolute;left:402px;top:252.55px" width="6" height="7"><polygon points="6,0 6,7 0,3.5" fill="#808080"/></svg>
<svg style="position:absolute;left:599.1px;top:252.55px" width="6" height="7"><polygon points="0,0 0,7 6,3.5" fill="#e8e8e8"/></svg>
<div style="position:absolute;left:410.80px;top:251.46px;height:10.38px;line-height:10.38px;font-size:8.3px;color:#acacac;font-weight:400;font-family:'Liberation Sans', sans-serif;white-space:nowrap;letter-spacing:-0.1px">from_translate</div>
<div style="position:absolute;right:436.40px;text-align:right;top:251.40px;height:10.50px;line-height:10.50px;font-size:8.4px;color:#f2f2f2;font-weight:400;font-family:'Liberation Sans', sans-serif;white-space:nowrap;letter-spacing:-0.05px">auto</div>
<div style="position:absolute;left:399px;top:265.6px;width:209.60000000000002px;height:11.299999999999955px;background:#202020;border-radius:5.649999999999977px;"></div>
<svg style="position:absolute;left:402px;top:267.75px" width="6" height="7"><polygon points="6,0 6,7 0,3.5" fill="#e8e8e8"/></svg>
<svg style="position:absolute;left:599.1px;top:267.75px" width="6" height="7"><polygon points="0,0 0,7 6,3.5" fill="#e8e8e8"/></svg>
<div style="position:absolute;left:410.80px;top:266.66px;height:10.38px;line-height:10.38px;font-size:8.3px;color:#acacac;font-weight:400;font-family:'Liberation Sans', sans-serif;white-space:nowrap;letter-spacing:-0.1px">to_translate</div>
<div style="position:absolute;right:436.40px;text-align:right;top:266.60px;height:10.50px;line-height:10.50px;font-size:8.4px;color:#f2f2f2;font-weight:400;font-family:'Liberation Sans', sans-serif;white-space:nowrap;letter-spacing:-0.05px">en</div>
<div style="position:absolute;left:399px;top:280.8px;width:209.60000000000002px;height:11.300000000000011px;background:#202020;border-radius:5.650000000000006px;"></div>
<div style="position:absolute;left:407.50px;top:281.86px;height:10.38px;line-height:10.38px;font-size:8.3px;color:#acacac;font-weight:400;font-family:'Liberation Sans', sans-serif;white-space:nowrap;letter-spacing:-0.1px">manual_translate</div>
<div style="position:absolute;right:430.90px;text-align:right;top:281.86px;height:10.38px;line-height:10.38px;font-size:8.3px;color:#9a9a9a;font-weight:400;font-family:'Liberation Sans', sans-serif;white-space:nowrap;">false</div>
<div style="position:absolute;left:597.1px;top:282.15000000000003px;width:8.6px;height:8.6px;background:#2a2a2a;border-radius:50%;"></div>
<div style="position:absolute;left:398.8px;top:295.8px;width:209.8px;height:11.3px;background:#202020;border-radius:1px;"></div>
<div style="position:absolute;left:303.70px;width:400px;text-align:center;top:296.91px;height:10.38px;line-height:10.38px;font-size:8.3px;color:#ececec;font-weight:400;font-family:'Liberation Sans', sans-serif;white-space:nowrap;">Manual Trasnlate</div>
<div style="position:absolute;left:395px;top:316.5px;width:217.4px;height:75.8px;background:#222222;"></div>
<div style="position:absolute;left:397.00px;top:319.48px;height:7.25px;line-height:7.25px;font-size:5.8px;color:#6e6e6e;font-weight:400;font-family:'Liberation Mono', monospace;white-space:nowrap;">Input prompt</div>
<div style="position:absolute;left:389.4px;top:417.6px;width:131.60000000000002px;height:84.19999999999999px;background:#3a5434;border-radius:4px;box-shadow:1px 1px 2px rgba(0,0,0,0.45);overflow:hidden"><div style="position:absolute;left:0;top:0;right:0;height:20.19999999999999px;background:#223121"></div></div>
<svg style="position:absolute;left:392.9px;top:421.30px" width="14" height="13" viewBox="0 0 14 13"><rect x="0.3" y="0.3" width="13.4" height="12.4" rx="3" fill="#4a86e4" stroke="#6aa0f0" stroke-width="0.6"/><g fill="none" stroke="#e6f0ff" stroke-width="1.05"><circle cx="4.3" cy="3.6" r="1.35"/><circle cx="9.6" cy="3.6" r="1.35"/><circle cx="4.3" cy="9.3" r="1.35"/><path d="M5.65 3.6 H8.25"/><path d="M9.8 4.95 Q10 7.6 7.2 8.3 Q6 8.6 5.6 9"/></g></svg>
<div style="position:absolute;left:407.90px;top:423.14px;height:11.12px;line-height:11.12px;font-size:8.9px;color:#b0b8ad;font-weight:400;font-family:'Liberation Sans', sans-serif;white-space:nowrap;">動画時間(秒) / FPS</div>
<svg style="position:absolute;left:503.7px;top:422.70px" width="11" height="11" viewBox="0 0 11 11"><g fill="none" stroke="#a3ae9f" stroke-width="1.05"><path d="M0.6 4.6 V1.8 Q0.6 0.6 1.8 0.6 H9 Q10.2 0.6 10.2 1.8 V8.4 Q10.2 9.6 9 9.6 H5.2"/><rect x="0.6" y="6.1" width="3.4" height="3.5" rx="0.6"/><path d="M5.6 5.4 L7.6 3.2"/></g><polygon points="8.9,1.9 5.5,2.4 8.4,5.3" fill="#a3ae9f"/></svg>
<div style="position:absolute;left:501px;top:405.7px;width:18.799999999999955px;height:10.0px;background:#0f190f;border-radius:3px;"></div>
<div style="position:absolute;left:310.40px;width:400px;text-align:center;top:405.53px;height:10.75px;line-height:10.75px;font-size:8.6px;color:#f2f2f2;font-weight:700;font-family:'Liberation Sans', sans-serif;white-space:nowrap;transform:scaleX(0.87);transform-origin:50% 50%;">#63</div>
<div style="position:absolute;left:513.5px;top:443.9px;width:4.6px;height:4.6px;background:#8fe08f;border-radius:50%;box-shadow:0 0 0 0.7px #1d2a1c;"></div>
<div style="position:absolute;right:514.70px;text-align:right;top:441.61px;height:10.38px;line-height:10.38px;font-size:8.3px;color:#b0bbac;font-weight:400;font-family:'Liberation Sans', sans-serif;white-space:nowrap;letter-spacing:-0.1px">INT</div>
<div style="position:absolute;left:513.5px;top:456.5px;width:4.6px;height:4.6px;background:#8fe08f;border-radius:50%;box-shadow:0 0 0 0.7px #1d2a1c;"></div>
<div style="position:absolute;right:514.70px;text-align:right;top:454.21px;height:10.38px;line-height:10.38px;font-size:8.3px;color:#b0bbac;font-weight:400;font-family:'Liberation Sans', sans-serif;white-space:nowrap;letter-spacing:-0.1px">FLOAT</div>
<div style="position:absolute;left:399.3px;top:467px;width:112.19999999999999px;height:11.300000000000011px;background:#202020;border-radius:5.650000000000006px;"></div>
<svg style="position:absolute;left:402.3px;top:469.15px" width="6" height="7"><polygon points="6,0 6,7 0,3.5" fill="#e8e8e8"/></svg>
<svg style="position:absolute;left:502.0px;top:469.15px" width="6" height="7"><polygon points="0,0 0,7 6,3.5" fill="#e8e8e8"/></svg>
<div style="position:absolute;left:411.10px;top:468.06px;height:10.38px;line-height:10.38px;font-size:8.3px;color:#acacac;font-weight:400;font-family:'Liberation Sans', sans-serif;white-space:nowrap;letter-spacing:-0.1px">VideoLength</div>
<div style="position:absolute;right:533.50px;text-align:right;top:468.00px;height:10.50px;line-height:10.50px;font-size:8.4px;color:#f2f2f2;font-weight:400;font-family:'Liberation Sans', sans-serif;white-space:nowrap;letter-spacing:-0.05px">5</div>
<div style="position:absolute;left:399.3px;top:482.3px;width:112.19999999999999px;height:11.399999999999977px;background:#202020;border-radius:5.699999999999989px;"></div>
<svg style="position:absolute;left:402.3px;top:484.50px" width="6" height="7"><polygon points="6,0 6,7 0,3.5" fill="#e8e8e8"/></svg>
<svg style="position:absolute;left:502.0px;top:484.50px" width="6" height="7"><polygon points="0,0 0,7 6,3.5" fill="#e8e8e8"/></svg>
<div style="position:absolute;left:411.10px;top:483.41px;height:10.38px;line-height:10.38px;font-size:8.3px;color:#acacac;font-weight:400;font-family:'Liberation Sans', sans-serif;white-space:nowrap;letter-spacing:-0.1px">FPS</div>
<div style="position:absolute;right:533.50px;text-align:right;top:483.35px;height:10.50px;line-height:10.50px;font-size:8.4px;color:#f2f2f2;font-weight:400;font-family:'Liberation Sans', sans-serif;white-space:nowrap;letter-spacing:-0.05px">16</div>
<div style="position:absolute;left:630.3px;top:209.5px;width:169.70000000000005px;height:69.69999999999999px;background:#3a5434;border-radius:4px;box-shadow:1px 1px 2px rgba(0,0,0,0.45);overflow:hidden"><div style="position:absolute;left:0;top:0;right:0;height:18.5px;background:#223121"></div></div>
<div style="position:absolute;left:636.1999999999999px;top:215.65px;width:6.2px;height:6.2px;background:#737d70;border-radius:50%;"></div>
<div style="position:absolute;left:649.30px;top:214.31px;height:10.88px;line-height:10.88px;font-size:8.7px;color:#b0b8ad;font-weight:400;font-family:'Liberation Sans', sans-serif;white-space:nowrap;">ランダムノイズ</div>
<div style="position:absolute;left:776px;top:195.7px;width:22px;height:10.700000000000017px;background:#0f190f;border-radius:3px;"></div>
<div style="position:absolute;left:587.00px;width:400px;text-align:center;top:195.88px;height:10.75px;line-height:10.75px;font-size:8.6px;color:#f2f2f2;font-weight:700;font-family:'Liberation Sans', sans-serif;white-space:nowrap;transform:scaleX(0.87);transform-origin:50% 50%;">#278</div>
<div style="position:absolute;left:792.2px;top:234.29999999999998px;width:4.6px;height:4.6px;background:#b9c2b6;border-radius:50%;box-shadow:0 0 0 0.7px #1d2a1c;"></div>
<div style="position:absolute;right:236.00px;text-align:right;top:232.01px;height:10.38px;line-height:10.38px;font-size:8.3px;color:#b0bbac;font-weight:400;font-family:'Liberation Sans', sans-serif;white-space:nowrap;letter-spacing:-0.1px">ノイズ</div>
<div style="position:absolute;left:640.2px;top:244.8px;width:150.19999999999993px;height:11.300000000000011px;background:#202020;border-radius:5.650000000000006px;"></div>
<svg style="position:absolute;left:643.2px;top:246.95px" width="6" height="7"><polygon points="6,0 6,7 0,3.5" fill="#e8e8e8"/></svg>
<svg style="position:absolute;left:780.9px;top:246.95px" width="6" height="7"><polygon points="0,0 0,7 6,3.5" fill="#e8e8e8"/></svg>
<div style="position:absolute;left:652.00px;top:245.86px;height:10.38px;line-height:10.38px;font-size:8.3px;color:#acacac;font-weight:400;font-family:'Liberation Sans', sans-serif;white-space:nowrap;letter-spacing:-0.1px">ノイズシード</div>
<div style="position:absolute;right:254.60px;text-align:right;top:245.80px;height:10.50px;line-height:10.50px;font-size:8.4px;color:#f2f2f2;font-weight:400;font-family:'Liberation Sans', sans-serif;white-space:nowrap;letter-spacing:-0.05px">30663240175723</div>
<div style="position:absolute;left:640.2px;top:260px;width:150.19999999999993px;height:11.300000000000011px;background:#202020;border-radius:5.650000000000006px;"></div>
<svg style="position:absolute;left:643.2px;top:262.15px" width="6" height="7"><polygon points="6,0 6,7 0,3.5" fill="#e8e8e8"/></svg>
<svg style="position:absolute;left:780.9px;top:262.15px" width="6" height="7"><polygon points="0,0 0,7 6,3.5" fill="#7a7a7a"/></svg>
<div style="position:absolute;left:652.00px;top:261.06px;height:10.38px;line-height:10.38px;font-size:8.3px;color:#acacac;font-weight:400;font-family:'Liberation Sans', sans-serif;white-space:nowrap;letter-spacing:-0.1px">生成後の制御</div>
<div style="position:absolute;right:254.60px;text-align:right;top:261.00px;height:10.50px;line-height:10.50px;font-size:8.4px;color:#f2f2f2;font-weight:400;font-family:'Liberation Sans', sans-serif;white-space:nowrap;letter-spacing:-0.05px">randomize</div>
<div style="position:absolute;left:634px;top:290.8px;width:166px;height:110.19999999999999px;background:#3a5434;border-radius:4px;box-shadow:1px 1px 2px rgba(0,0,0,0.45);overflow:hidden"><div style="position:absolute;left:0;top:0;right:0;height:18.19999999999999px;background:#223121"></div></div>
<svg style="position:absolute;left:637.5px;top:293.50px" width="14" height="13" viewBox="0 0 14 13"><rect x="0.3" y="0.3" width="13.4" height="12.4" rx="3" fill="#4a86e4" stroke="#6aa0f0" stroke-width="0.6"/><g fill="none" stroke="#e6f0ff" stroke-width="1.05"><circle cx="4.3" cy="3.6" r="1.35"/><circle cx="9.6" cy="3.6" r="1.35"/><circle cx="4.3" cy="9.3" r="1.35"/><path d="M5.65 3.6 H8.25"/><path d="M9.8 4.95 Q10 7.6 7.2 8.3 Q6 8.6 5.6 9"/></g></svg>
<div style="position:absolute;left:652.50px;top:294.40px;height:13.00px;line-height:13.00px;font-size:10.4px;color:#b0b8ad;font-weight:400;font-family:'Liberation Sans', sans-serif;white-space:nowrap;transform:scaleX(0.89);transform-origin:0 50%;">HighSamplerSettings</div>
<svg style="position:absolute;left:782.7px;top:294.90px" width="11" height="11" viewBox="0 0 11 11"><g fill="none" stroke="#a3ae9f" stroke-width="1.05"><path d="M0.6 4.6 V1.8 Q0.6 0.6 1.8 0.6 H9 Q10.2 0.6 10.2 1.8 V8.4 Q10.2 9.6 9 9.6 H5.2"/><rect x="0.6" y="6.1" width="3.4" height="3.5" rx="0.6"/><path d="M5.6 5.4 L7.6 3.2"/></g><polygon points="8.9,1.9 5.5,2.4 8.4,5.3" fill="#a3ae9f"/></svg>
<div style="position:absolute;left:774px;top:279.6px;width:24.600000000000023px;height:8.399999999999977px;background:#0f190f;border-radius:3px;"></div>
<div style="position:absolute;left:586.30px;width:400px;text-align:center;top:278.63px;height:10.75px;line-height:10.75px;font-size:8.6px;color:#f2f2f2;font-weight:700;font-family:'Liberation Sans', sans-serif;white-space:nowrap;transform:scaleX(0.87);transform-origin:50% 50%;">#290</div>
<div style="position:absolute;left:791.7px;top:315.59999999999997px;width:4.6px;height:4.6px;background:#e8c2ba;border-radius:50%;box-shadow:0 0 0 0.7px #1d2a1c;"></div>
<div style="position:absolute;right:236.50px;text-align:right;top:313.31px;height:10.38px;line-height:10.38px;font-size:8.3px;color:#b0bbac;font-weight:400;font-family:'Liberation Sans', sans-serif;white-space:nowrap;letter-spacing:-0.1px">SAMPLER</div>
<div style="position:absolute;left:791.7px;top:328.3px;width:4.6px;height:4.6px;background:#8fe08f;border-radius:50%;box-shadow:0 0 0 0.7px #1d2a1c;"></div>
<div style="position:absolute;right:236.50px;text-align:right;top:326.01px;height:10.38px;line-height:10.38px;font-size:8.3px;color:#b0bbac;font-weight:400;font-family:'Liberation Sans', sans-serif;white-space:nowrap;letter-spacing:-0.1px">scheduler</div>
<div style="position:absolute;left:791.7px;top:340.7px;width:4.6px;height:4.6px;background:#8fe08f;border-radius:50%;box-shadow:0 0 0 0.7px #1d2a1c;"></div>
<div style="position:absolute;right:236.50px;text-align:right;top:338.41px;height:10.38px;line-height:10.38px;font-size:8.3px;color:#b0bbac;font-weight:400;font-family:'Liberation Sans', sans-serif;white-space:nowrap;letter-spacing:-0.1px">CFG</div>
<div style="position:absolute;left:644px;top:351.3px;width:146px;height:11.399999999999977px;background:#202020;border-radius:5.699999999999989px;"></div>
<svg style="position:absolute;left:647px;top:353.50px" width="6" height="7"><polygon points="6,0 6,7 0,3.5" fill="#7a7a7a"/></svg>
<svg style="position:absolute;left:780.5px;top:353.50px" width="6" height="7"><polygon points="0,0 0,7 6,3.5" fill="#e8e8e8"/></svg>
<div style="position:absolute;left:655.80px;top:352.41px;height:10.38px;line-height:10.38px;font-size:8.3px;color:#acacac;font-weight:400;font-family:'Liberation Sans', sans-serif;white-space:nowrap;letter-spacing:-0.1px">sampler_name</div>
<div style="position:absolute;right:255.00px;text-align:right;top:352.35px;height:10.50px;line-height:10.50px;font-size:8.4px;color:#f2f2f2;font-weight:400;font-family:'Liberation Sans', sans-serif;white-space:nowrap;letter-spacing:-0.05px">euler</div>
<div style="position:absolute;left:644px;top:366.5px;width:146px;height:11.399999999999977px;background:#202020;border-radius:5.699999999999989px;"></div>
<svg style="position:absolute;left:647px;top:368.70px" width="6" height="7"><polygon points="6,0 6,7 0,3.5" fill="#7a7a7a"/></svg>
<svg style="position:absolute;left:780.5px;top:368.70px" width="6" height="7"><polygon points="0,0 0,7 6,3.5" fill="#e8e8e8"/></svg>
<div style="position:absolute;left:655.80px;top:367.61px;height:10.38px;line-height:10.38px;font-size:8.3px;color:#acacac;font-weight:400;font-family:'Liberation Sans', sans-serif;white-space:nowrap;letter-spacing:-0.1px">scheduler</div>
<div style="position:absolute;right:255.00px;text-align:right;top:367.55px;height:10.50px;line-height:10.50px;font-size:8.4px;color:#f2f2f2;font-weight:400;font-family:'Liberation Sans', sans-serif;white-space:nowrap;letter-spacing:-0.05px">simple</div>
<div style="position:absolute;left:644px;top:381.7px;width:146px;height:11.400000000000034px;background:#202020;border-radius:5.700000000000017px;"></div>
<svg style="position:absolute;left:647px;top:383.90px" width="6" height="7"><polygon points="6,0 6,7 0,3.5" fill="#e8e8e8"/></svg>
<svg style="position:absolute;left:780.5px;top:383.90px" width="6" height="7"><polygon points="0,0 0,7 6,3.5" fill="#e8e8e8"/></svg>
<div style="position:absolute;left:655.80px;top:382.81px;height:10.38px;line-height:10.38px;font-size:8.3px;color:#acacac;font-weight:400;font-family:'Liberation Sans', sans-serif;white-space:nowrap;letter-spacing:-0.1px">CFG</div>
<div style="position:absolute;right:255.00px;text-align:right;top:382.75px;height:10.50px;line-height:10.50px;font-size:8.4px;color:#f2f2f2;font-weight:400;font-family:'Liberation Sans', sans-serif;white-space:nowrap;letter-spacing:-0.05px">6.0</div>
<div style="position:absolute;left:811.5px;top:209px;width:170.20000000000005px;height:70px;background:#3a5434;border-radius:4px;box-shadow:1px 1px 2px rgba(0,0,0,0.45);overflow:hidden"><div style="position:absolute;left:0;top:0;right:0;height:18.69999999999999px;background:#223121"></div></div>
<div style="position:absolute;left:817.4px;top:215.25px;width:6.2px;height:6.2px;background:#737d70;border-radius:50%;"></div>
<div style="position:absolute;left:830.50px;top:212.85px;height:13.00px;line-height:13.00px;font-size:10.4px;color:#b0b8ad;font-weight:400;font-family:'Liberation Sans', sans-serif;white-space:nowrap;transform:scaleX(0.89);transform-origin:0 50%;">Step</div>
<div style="position:absolute;left:956.5px;top:195.7px;width:22.700000000000045px;height:11.300000000000011px;background:#0f190f;border-radius:3px;"></div>
<div style="position:absolute;left:767.85px;width:400px;text-align:center;top:196.17px;height:10.75px;line-height:10.75px;font-size:8.6px;color:#f2f2f2;font-weight:700;font-family:'Liberation Sans', sans-serif;white-space:nowrap;transform:scaleX(0.87);transform-origin:50% 50%;">#277</div>
<div style="position:absolute;left:973.7px;top:234.29999999999998px;width:4.6px;height:4.6px;background:#8fe08f;border-radius:50%;box-shadow:0 0 0 0.7px #1d2a1c;"></div>
<div style="position:absolute;right:54.50px;text-align:right;top:232.01px;height:10.38px;line-height:10.38px;font-size:8.3px;color:#b0bbac;font-weight:400;font-family:'Liberation Sans', sans-serif;white-space:nowrap;letter-spacing:-0.1px">整数</div>
<div style="position:absolute;left:821.4px;top:244.8px;width:150.20000000000005px;height:11.300000000000011px;background:#202020;border-radius:5.650000000000006px;"></div>
<svg style="position:absolute;left:824.4px;top:246.95px" width="6" height="7"><polygon points="6,0 6,7 0,3.5" fill="#e8e8e8"/></svg>
<svg style="position:absolute;left:962.1px;top:246.95px" width="6" height="7"><polygon points="0,0 0,7 6,3.5" fill="#e8e8e8"/></svg>
<div style="position:absolute;left:833.20px;top:245.86px;height:10.38px;line-height:10.38px;font-size:8.3px;color:#acacac;font-weight:400;font-family:'Liberation Sans', sans-serif;white-space:nowrap;letter-spacing:-0.1px">値</div>
<div style="position:absolute;right:73.40px;text-align:right;top:245.80px;height:10.50px;line-height:10.50px;font-size:8.4px;color:#f2f2f2;font-weight:400;font-family:'Liberation Sans', sans-serif;white-space:nowrap;letter-spacing:-0.05px">20</div>
<div style="position:absolute;left:821.4px;top:260px;width:150.20000000000005px;height:11.300000000000011px;background:#202020;border-radius:5.650000000000006px;"></div>
<svg style="position:absolute;left:824.4px;top:262.15px" width="6" height="7"><polygon points="6,0 6,7 0,3.5" fill="#7a7a7a"/></svg>
<svg style="position:absolute;left:962.1px;top:262.15px" width="6" height="7"><polygon points="0,0 0,7 6,3.5" fill="#e8e8e8"/></svg>
<div style="position:absolute;left:833.20px;top:261.06px;height:10.38px;line-height:10.38px;font-size:8.3px;color:#acacac;font-weight:400;font-family:'Liberation Sans', sans-serif;white-space:nowrap;letter-spacing:-0.1px">生成後の制御</div>
<div style="position:absolute;right:73.40px;text-align:right;top:261.00px;height:10.50px;line-height:10.50px;font-size:8.4px;color:#f2f2f2;font-weight:400;font-family:'Liberation Sans', sans-serif;white-space:nowrap;letter-spacing:-0.05px">fixed</div>
<div style="position:absolute;left:815px;top:290.8px;width:166.79999999999995px;height:110.0px;background:#3a5434;border-radius:4px;box-shadow:1px 1px 2px rgba(0,0,0,0.45);overflow:hidden"><div style="position:absolute;left:0;top:0;right:0;height:18.19999999999999px;background:#223121"></div></div>
<svg style="position:absolute;left:818.5px;top:293.50px" width="14" height="13" viewBox="0 0 14 13"><rect x="0.3" y="0.3" width="13.4" height="12.4" rx="3" fill="#4a86e4" stroke="#6aa0f0" stroke-width="0.6"/><g fill="none" stroke="#e6f0ff" stroke-width="1.05"><circle cx="4.3" cy="3.6" r="1.35"/><circle cx="9.6" cy="3.6" r="1.35"/><circle cx="4.3" cy="9.3" r="1.35"/><path d="M5.65 3.6 H8.25"/><path d="M9.8 4.95 Q10 7.6 7.2 8.3 Q6 8.6 5.6 9"/></g></svg>
<div style="position:absolute;left:833.50px;top:294.40px;height:13.00px;line-height:13.00px;font-size:10.4px;color:#b0b8ad;font-weight:400;font-family:'Liberation Sans', sans-serif;white-space:nowrap;transform:scaleX(0.89);transform-origin:0 50%;">LowModelSettings</div>
<svg style="position:absolute;left:964.5px;top:294.90px" width="11" height="11" viewBox="0 0 11 11"><g fill="none" stroke="#a3ae9f" stroke-width="1.05"><path d="M0.6 4.6 V1.8 Q0.6 0.6 1.8 0.6 H9 Q10.2 0.6 10.2 1.8 V8.4 Q10.2 9.6 9 9.6 H5.2"/><rect x="0.6" y="6.1" width="3.4" height="3.5" rx="0.6"/><path d="M5.6 5.4 L7.6 3.2"/></g><polygon points="8.9,1.9 5.5,2.4 8.4,5.3" fill="#a3ae9f"/></svg>
<div style="position:absolute;left:956.6px;top:279.6px;width:22.699999999999932px;height:8.399999999999977px;background:#0f190f;border-radius:3px;"></div>
<div style="position:absolute;left:767.95px;width:400px;text-align:center;top:278.63px;height:10.75px;line-height:10.75px;font-size:8.6px;color:#f2f2f2;font-weight:700;font-family:'Liberation Sans', sans-serif;white-space:nowrap;transform:scaleX(0.87);transform-origin:50% 50%;">#291</div>
<div style="position:absolute;left:973.4000000000001px;top:315.59999999999997px;width:4.6px;height:4.6px;background:#e8c2ba;border-radius:50%;box-shadow:0 0 0 0.7px #1d2a1c;"></div>
<div style="position:absolute;right:54.80px;text-align:right;top:313.31px;height:10.38px;line-height:10.38px;font-size:8.3px;color:#b0bbac;font-weight:400;font-family:'Liberation Sans', sans-serif;white-space:nowrap;letter-spacing:-0.1px">SAMPLER</div>
<div style="position:absolute;left:973.4000000000001px;top:328.3px;width:4.6px;height:4.6px;background:#8fe08f;border-radius:50%;box-shadow:0 0 0 0.7px #1d2a1c;"></div>
<div style="position:absolute;right:54.80px;text-align:right;top:326.01px;height:10.38px;line-height:10.38px;font-size:8.3px;color:#b0bbac;font-weight:400;font-family:'Liberation Sans', sans-serif;white-space:nowrap;letter-spacing:-0.1px">scheduler</div>
<div style="position:absolute;left:973.4000000000001px;top:340.7px;width:4.6px;height:4.6px;background:#8fe08f;border-radius:50%;box-shadow:0 0 0 0.7px #1d2a1c;"></div>
<div style="position:absolute;right:54.80px;text-align:right;top:338.41px;height:10.38px;line-height:10.38px;font-size:8.3px;color:#b0bbac;font-weight:400;font-family:'Liberation Sans', sans-serif;white-space:nowrap;letter-spacing:-0.1px">CFG</div>
<div style="position:absolute;left:825.6px;top:351.3px;width:145.79999999999995px;height:11.399999999999977px;background:#202020;border-radius:5.699999999999989px;"></div>
<svg style="position:absolute;left:828.6px;top:353.50px" width="6" height="7"><polygon points="6,0 6,7 0,3.5" fill="#7a7a7a"/></svg>
<svg style="position:absolute;left:961.9px;top:353.50px" width="6" height="7"><polygon points="0,0 0,7 6,3.5" fill="#e8e8e8"/></svg>
<div style="position:absolute;left:837.40px;top:352.41px;height:10.38px;line-height:10.38px;font-size:8.3px;color:#acacac;font-weight:400;font-family:'Liberation Sans', sans-serif;white-space:nowrap;letter-spacing:-0.1px">sampler_name</div>
<div style="position:absolute;right:73.60px;text-align:right;top:352.35px;height:10.50px;line-height:10.50px;font-size:8.4px;color:#f2f2f2;font-weight:400;font-family:'Liberation Sans', sans-serif;white-space:nowrap;letter-spacing:-0.05px">euler</div>
<div style="position:absolute;left:825.6px;top:366.5px;width:145.79999999999995px;height:11.399999999999977px;background:#202020;border-radius:5.699999999999989px;"></div>
<svg style="position:absolute;left:828.6px;top:368.70px" width="6" height="7"><polygon points="6,0 6,7 0,3.5" fill="#7a7a7a"/></svg>
<svg style="position:absolute;left:961.9px;top:368.70px" width="6" height="7"><polygon points="0,0 0,7 6,3.5" fill="#e8e8e8"/></svg>
<div style="position:absolute;left:837.40px;top:367.61px;height:10.38px;line-height:10.38px;font-size:8.3px;color:#acacac;font-weight:400;font-family:'Liberation Sans', sans-serif;white-space:nowrap;letter-spacing:-0.1px">scheduler</div>
<div style="position:absolute;right:73.60px;text-align:right;top:367.55px;height:10.50px;line-height:10.50px;font-size:8.4px;color:#f2f2f2;font-weight:400;font-family:'Liberation Sans', sans-serif;white-space:nowrap;letter-spacing:-0.05px">simple</div>
<div style="position:absolute;left:825.6px;top:381.7px;width:145.79999999999995px;height:11.400000000000034px;background:#202020;border-radius:5.700000000000017px;"></div>
<svg style="position:absolute;left:828.6px;top:383.90px" width="6" height="7"><polygon points="6,0 6,7 0,3.5" fill="#e8e8e8"/></svg>
<svg style="position:absolute;left:961.9px;top:383.90px" width="6" height="7"><polygon points="0,0 0,7 6,3.5" fill="#e8e8e8"/></svg>
<div style="position:absolute;left:837.40px;top:382.81px;height:10.38px;line-height:10.38px;font-size:8.3px;color:#acacac;font-weight:400;font-family:'Liberation Sans', sans-serif;white-space:nowrap;letter-spacing:-0.1px">CFG</div>
<div style="position:absolute;right:73.60px;text-align:right;top:382.75px;height:10.50px;line-height:10.50px;font-size:8.4px;color:#f2f2f2;font-weight:400;font-family:'Liberation Sans', sans-serif;white-space:nowrap;letter-spacing:-0.05px">6.0</div>
<div style="position:absolute;left:24px;top:88px;width:362px;height:508px;box-sizing:border-box;border:4px solid #dc283a;"></div>
</body></html>
